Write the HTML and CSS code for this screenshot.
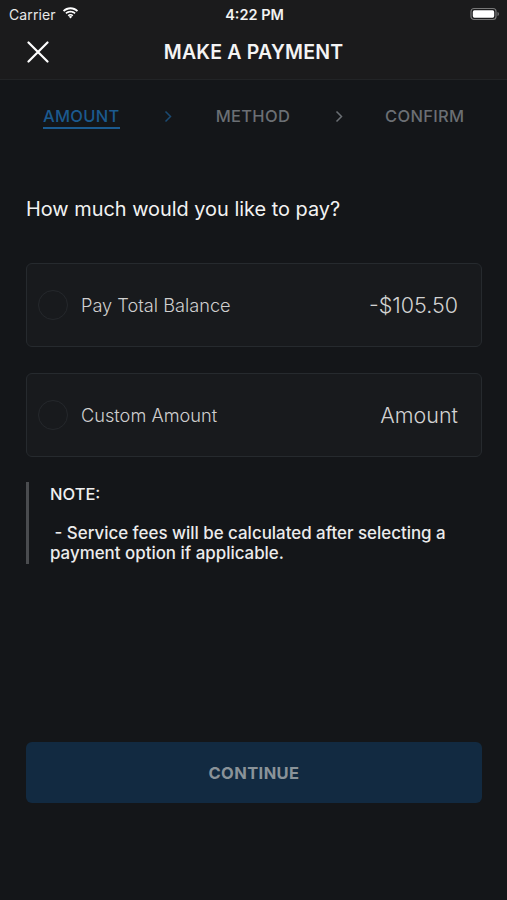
FILE: index.html
```html
<!DOCTYPE html>
<html lang="en">
<head>
<meta charset="utf-8">
<title>Make a Payment</title>
<link rel="stylesheet" href="styles.css">
</head>
<body>
<div class="screen">
  <header class="top">
    <div class="status">
      <div class="status-left">
        <span class="carrier">Carrier</span>
        <svg class="wifi" width="17" height="12" viewBox="0 0 17 12">
          <path d="M8.5 2.2c2.4 0 4.6.9 6.3 2.5l1.3-1.3C14 1.4 11.4.3 8.5.3S3 1.4.9 3.4l1.3 1.3C3.9 3.1 6.1 2.2 8.5 2.2z" fill="#fff"/>
          <path d="M8.5 5.6c1.5 0 2.8.5 3.9 1.5l1.3-1.3C12.3 4.5 10.5 3.7 8.5 3.7S4.7 4.5 3.3 5.8l1.3 1.3c1.1-1 2.4-1.5 3.9-1.5z" fill="#fff"/>
          <path d="M8.5 8.9c.7 0 1.3.2 1.8.6L8.5 11.5 6.7 9.5c.5-.4 1.1-.6 1.8-.6z" fill="#fff"/>
          <path d="M8.5 7.1c1.1 0 2.1.4 2.8 1.1L10.3 9.2c-.5-.4-1.1-.7-1.8-.7s-1.3.3-1.8.7L5.7 8.2c.7-.7 1.7-1.1 2.8-1.1z" fill="#fff"/>
        </svg>
      </div>
      <span class="time">4:22 PM</span>
      <div class="status-right">
        <svg class="battery" width="30" height="14" viewBox="0 0 30 14">
          <rect x="1" y="1.5" width="25" height="11" rx="3" fill="none" stroke="#777" stroke-width="1.2"/>
          <rect x="2.8" y="3.3" width="21.4" height="7.4" rx="1.6" fill="#fff"/>
          <path d="M27.5 5v4c.9-.3 1.4-1 1.4-2s-.5-1.7-1.4-2z" fill="#777"/>
        </svg>
      </div>
    </div>
    <nav class="navbar">
      <button class="close" aria-label="Close">
        <svg width="22" height="22" viewBox="0 0 22 22">
          <path d="M1.5 1.5l19 19M20.5 1.5l-19 19" stroke="#fff" stroke-width="2.2" stroke-linecap="round"/>
        </svg>
      </button>
      <h1 class="title">MAKE A PAYMENT</h1>
    </nav>
  </header>

  <main class="content">
    <ol class="steps">
      <li class="step active">AMOUNT</li>
      <li class="chev chev-active">
        <svg width="8" height="13" viewBox="0 0 8 13"><path d="M1.5 1.5l5 5-5 5" fill="none" stroke="currentColor" stroke-width="1.5"/></svg>
      </li>
      <li class="step">METHOD</li>
      <li class="chev chev-next">
        <svg width="8" height="13" viewBox="0 0 8 13"><path d="M1.5 1.5l5 5-5 5" fill="none" stroke="currentColor" stroke-width="1.5"/></svg>
      </li>
      <li class="step">CONFIRM</li>
    </ol>

    <h2 class="question">How much would you like to pay?</h2>

    <div class="options">
      <label class="option">
        <span class="radio"></span>
        <span class="opt-label">Pay Total Balance</span>
        <span class="opt-value">-$105.50</span>
      </label>
      <label class="option">
        <span class="radio"></span>
        <span class="opt-label">Custom Amount</span>
        <span class="opt-value">Amount</span>
      </label>
    </div>

    <div class="note">
      <p class="note-head">NOTE:</p>
      <p class="note-body">&nbsp;- Service fees will be calculated after selecting a payment option if applicable.</p>
    </div>

    <button class="continue">CONTINUE</button>
  </main>
</div>
</body>
</html>
```

FILE: styles.css
```css
* { box-sizing: border-box; }
html, body { margin: 0; padding: 0; }
body {
  background: #141619;
  font-family: Inter, "Noto Sans", "Liberation Sans", sans-serif;
  color: #fff;
}
.screen {
  width: 507px;
  height: 900px;
  display: flex;
  flex-direction: column;
  background: #141619;
}
.top {
  background: #1b1b1c;
  border-bottom: 1px solid #222426;
}
.status {
  height: 28px;
  display: grid;
  grid-template-columns: 1fr auto 1fr;
  align-items: center;
  padding: 0 7px 0 9px;
}
.status-left { display: flex; align-items: center; gap: 6px; }
.carrier { font-size: 14px; color: #e8e8e8; letter-spacing: 0.1px; }
.wifi { margin-top: -2px; }
.time { font-size: 14.5px; font-weight: 600; color: #f2f2f2; }
.status-right { display: flex; justify-content: flex-end; }
.navbar {
  height: 51px;
  display: flex;
  align-items: center;
  justify-content: center;
  position: relative;
}
.close {
  position: absolute;
  left: 27px;
  top: 13px;
  background: none;
  border: 0;
  padding: 0;
  width: 22px;
  height: 22px;
  display: flex;
}
.title {
  margin: 0 0 3px;
  font-size: 19.5px;
  font-weight: 600;
  letter-spacing: 0.2px;
  color: #f4f4f4;
}
.content {
  flex: 1;
  display: flex;
  flex-direction: column;
  padding: 0 25px 0 26px;
}
.steps {
  list-style: none;
  margin: 0;
  padding: 26px 0 0 17px;
  display: flex;
  height: 73px;
  align-items: flex-start;
}
.step {
  font-size: 16.5px;
  font-weight: 500;
  color: #6b6f74;
  letter-spacing: 0.3px;
  line-height: 20px;
}
.step.active {
  color: #1b5a8f;
  border-bottom: 2px solid #1b5a8f;
  padding-bottom: 1px;
}
.chev { color: #6b6f74; display: flex; padding-top: 4px; }
.chev-active { color: #1b4a72; margin: 0 44px 0 44px; }
.chev-next { margin: 0 42px 0 45px; }
.question {
  margin: 44px 0 0;
  font-size: 19.9px;
  font-weight: 400;
  color: #f2f2f2;
  line-height: 24px;
}
.options {
  margin-top: 42px;
  display: flex;
  flex-direction: column;
  gap: 26px;
}
.option {
  height: 84px;
  background: #181a1d;
  border: 1px solid #262a2e;
  border-radius: 6px;
  display: flex;
  align-items: center;
  padding: 0 23px 0 11px;
}
.radio {
  width: 30px;
  height: 30px;
  border-radius: 50%;
  border: 1.5px solid #25282c;
  flex: none;
}
.opt-label {
  margin-left: 13px;
  font-size: 18.2px;
  font-weight: 300;
  color: #cfcfcf;
  flex: 1;
}
.opt-value {
  font-size: 21.5px;
  font-weight: 300;
  color: #d2d2d2;
}
.note {
  margin-top: 25px;
  border-left: 3px solid #4a4c4f;
  padding: 2px 0 0 21px;
  height: 82px;
}
.note p { margin: 0; }
.note-head {
  font-size: 16.5px;
  font-weight: 500;
  color: #f0f0f0;
  line-height: 20px;
}
.note-body {
  margin-top: 19px !important;
  font-size: 16.9px;
  font-weight: 500;
  color: #ececec;
  line-height: 20px;
  padding-right: 10px;
}
.continue {
  margin-top: 178px;
  height: 61px;
  width: 100%;
  border: 0;
  border-radius: 6px;
  background: #122a41;
  color: #8a9399;
  font-family: inherit;
  font-size: 16.5px;
  font-weight: 700;
  letter-spacing: 0.4px;
}
```
